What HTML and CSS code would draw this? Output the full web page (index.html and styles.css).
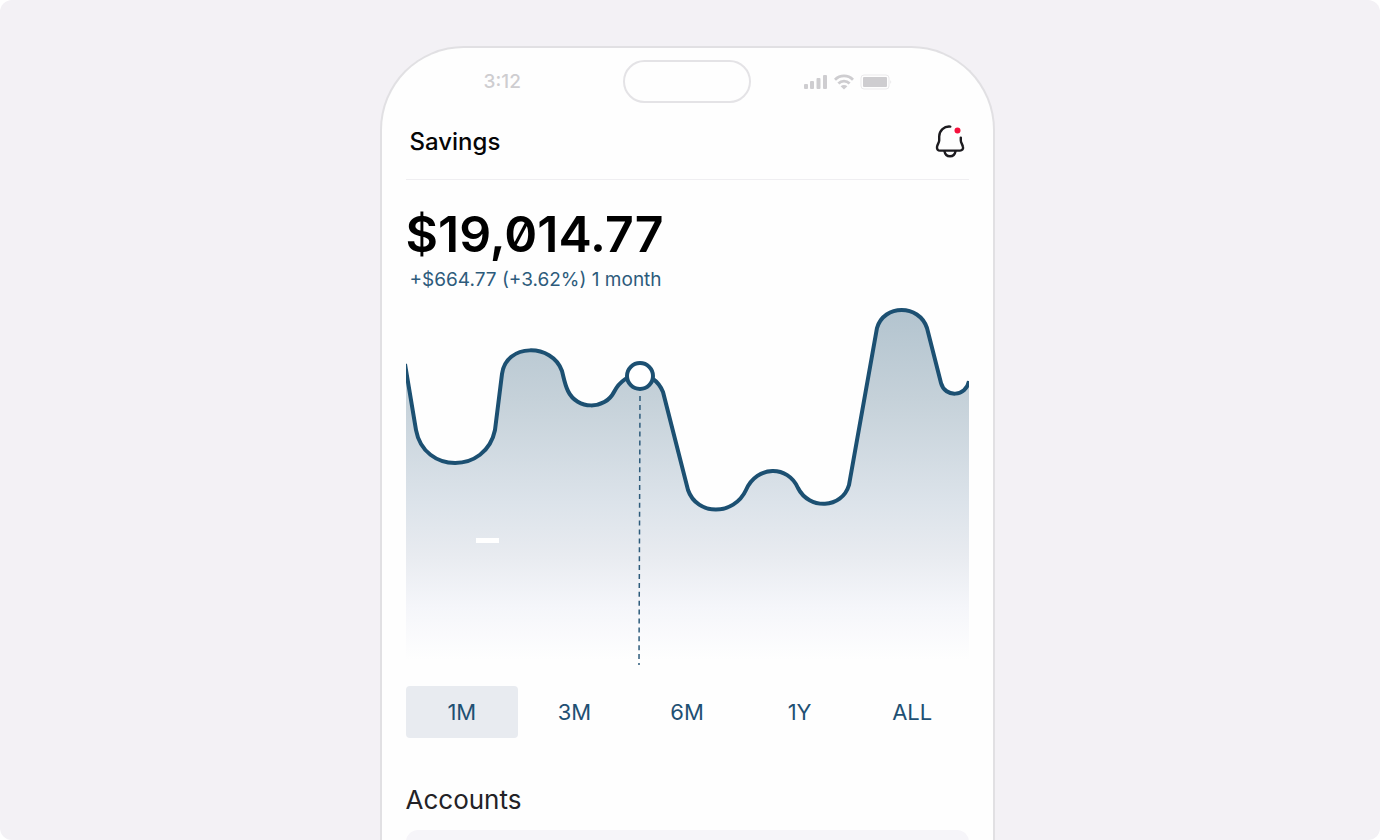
FILE: index.html
```html
<!DOCTYPE html>
<html lang="en">

<head>
    <meta charset="utf-8">
    <meta name="viewport" content="width=device-width, initial-scale=1.0">
    <title>Savings</title>

    <link rel="stylesheet" href="styles.css">
</head>

<body>
    <div class="scene">
        <div class="phone">
            <div class="status-bar">
                <span class="time">3:12</span>
                <div class="island"></div>
                <div class="status-icons">
                    <svg width="24" height="16" viewBox="0 0 24 16">
                        <g fill="#cecdd0">
                            <rect x="0" y="10" width="4" height="5" rx="1" />
                            <rect x="6" y="7" width="4" height="8" rx="1" />
                            <rect x="12.5" y="4" width="4" height="11" rx="1" />
                            <rect x="19" y="1" width="4" height="14" rx="1" />
                        </g>
                    </svg>
                    <svg width="20" height="16" viewBox="0 0 20 16">
                        <g fill="none" stroke="#cecdd0" stroke-width="2.8">
                            <path d="M1 5.7C6 .7 14 .7 19 5.7" />
                            <path d="M4.4 9.6C7.6 6.4 12.4 6.4 15.6 9.6" />
                        </g>
                        <path d="M6.6 12.2C8.6 10.5 11.4 10.5 13.4 12.2L10 15.4Z" fill="#cecdd0" />
                    </svg>
                    <svg width="32" height="16" viewBox="0 0 32 16">
                        <rect x="1" y="1" width="28" height="14" rx="3" fill="none" stroke="#ebeaec" />
                        <rect x="3" y="3" width="24" height="10" rx="1" fill="#cecdd0" />
                        <path d="M30.5 6Q32 8 30.5 10Z" fill="#dedde0" />
                    </svg>
                </div>
            </div>

            <header>
                <h1>Savings</h1>
                <button class="bell" aria-label="Notifications">
                    <svg width="30" height="34" viewBox="0 0 30 34">
                        <g fill="none" stroke="#1c1b1f" stroke-width="2.4" stroke-linecap="round" stroke-linejoin="round">
                            <path d="M15.3 2.6C9 1.900 4.3 6.8 4.2 12.5V16.5C4.2 18.6 2.2 20.5 2 23C1.8 25.300 3 26.6 5 26.6H25C27.2 26.6 28.4 25 28 23C27.6 20.6 25.8 18.6 25.8 16.5V13.6" />
                            <path d="M9.5 27.2C10 30.3 12 32.2 15 32.2C18 32.2 20 30.3 20.5 27.2" />
                        </g>
                        <circle cx="22.5" cy="6.5" r="3" fill="#f5103c" />
                    </svg>
                </button>
            </header>

            <main>
                <section class="balance">
                    <h2>$19,014.77</h2>
                    <p>+$664.77 (+3.62%) 1 month</p>
                </section>

                <svg class="chart" viewBox="0 0 563 366">
                    <defs>
                        <linearGradient id="fade" gradientUnits="userSpaceOnUse" x1="0" y1="10" x2="0" y2="360">
                            <stop offset="0" stop-color="#b3c4cf" />
                            <stop offset=".25" stop-color="#c5d1d9" />
                            <stop offset=".55" stop-color="#dce3ea" />
                            <stop offset=".7" stop-color="#e8ebf0" />
                            <stop offset=".85" stop-color="#f5f6fa" />
                            <stop offset="1" stop-color="#fefefe" />
                        </linearGradient>
                    </defs>
                    <path fill="url(#fade)" d="M0 70L10 130C18 174 80 174 89 130L96 74C100 43 146 43 156 71C158 79 159 85 162 91C171 110 199 110 208 92C219 70 247 68 257 92L282 190C291 216 328 216 340 190C351 165 382 165 392 188C403 210 436 209 443 185L471 28C478 4 513 4 521 28L535 83C539 98 560 97 563 81V360H0Z" />
                    <path fill="none" stroke="#1c5072" stroke-width="4" d="M-1 64L10 130C18 174 80 174 89 130L96 74C100 43 146 43 156 71C158 79 159 85 162 91C171 110 199 110 208 92C219 70 247 68 257 92L282 190C291 216 328 216 340 190C351 165 382 165 392 188C403 210 436 209 443 185L471 28C478 4 513 4 521 28L535 83C539 98 560 97 563 81" />
                    <rect x="70" y="238" width="23" height="5" fill="#fff" />
                    <path d="M234 96L233 365" stroke="#2d5b7b" stroke-width="1.5" stroke-dasharray="5 3.9" />
                    <circle cx="234" cy="76" r="13" fill="#fff" stroke="#1c5072" stroke-width="4" />
                </svg>

                <nav>
                    <button class="range active">1M</button>
                    <button class="range">3M</button>
                    <button class="range">6M</button>
                    <button class="range">1Y</button>
                    <button class="range">ALL</button>
                </nav>

                <section class="accounts">
                    <h3>Accounts</h3>
                    <div class="account-list"></div>
                </section>
            </main>
        </div>
    </div>
</body>

</html>
```
FILE: styles.css
```css
* {
    box-sizing: border-box;
}

body {
    margin: 0;
    background: #fff;
    font-family: Inter, "Liberation Sans", sans-serif;
}

h1, h2, h3, p {
    margin: 0;
}

button {
    border: 0;
    padding: 0;
    background: none;
    font-family: inherit;
    cursor: pointer;
}

svg {
    display: block;
}

.scene {
    height: 100vh;
    padding: 46px 6px 0 0;
    overflow: hidden;
    background: #f3f1f5;
    border-radius: 12px;
}

.phone {
    width: 100%;
    max-width: 615px;
    min-height: 100%;
    margin: 0 auto;
    padding-top: 12px;
    background: #fefefe;
    border: 2px solid #e1e0e3;
    border-bottom: 0;
    border-radius: 84px 84px 0 0;
}

.status-bar {
    display: grid;
    grid-template-columns: 1fr 128px 1fr;
    align-items: center;
    text-align: center;
}

.time {
    color: #cecdd0;
    font-size: 19px;
    font-weight: 500;
}

.island {
    height: 43px;
    border: 2px solid #e4e3e6;
    border-radius: 22px;
}

.status-icons {
    display: flex;
    gap: 6px;
    justify-content: center;
    padding-right: 48px;
}

header {
    display: flex;
    justify-content: space-between;
    align-items: center;
    height: 77px;
    margin: 0 24px;
    padding: 0 4px;
    border-bottom: 1px solid #efeef1;
}

h1 {
    color: #050506;
    font-size: 24px;
    font-weight: 500;
}

main {
    padding: 24px 24px 0;
}

h2 {
    color: #000;
    font-size: 50px;
    font-weight: 600;
    font-feature-settings: "zero";
    line-height: 60px;
}

.balance p {
    padding-left: 4px;
    color: #2d5b7b;
    font-size: 19px;
    line-height: 32px;
}

.chart {
    width: 100%;
    margin-top: 4px;
}

nav {
    display: grid;
    grid-template-columns: repeat(5, 1fr);
    margin-top: 20px;
}

.range {
    height: 52px;
    border-radius: 4px;
    color: #1f5073;
    font-size: 22px;
}

.active {
    background: #e8ebf0;
}

.accounts {
    margin-top: 46px;
}

h3 {
    color: #232226;
    font-size: 26px;
    font-weight: 400;
    line-height: 32px;
}

.account-list {
    height: 80px;
    margin-top: 14px;
    background: #f6f5f9;
    border-radius: 12px;
}
```
